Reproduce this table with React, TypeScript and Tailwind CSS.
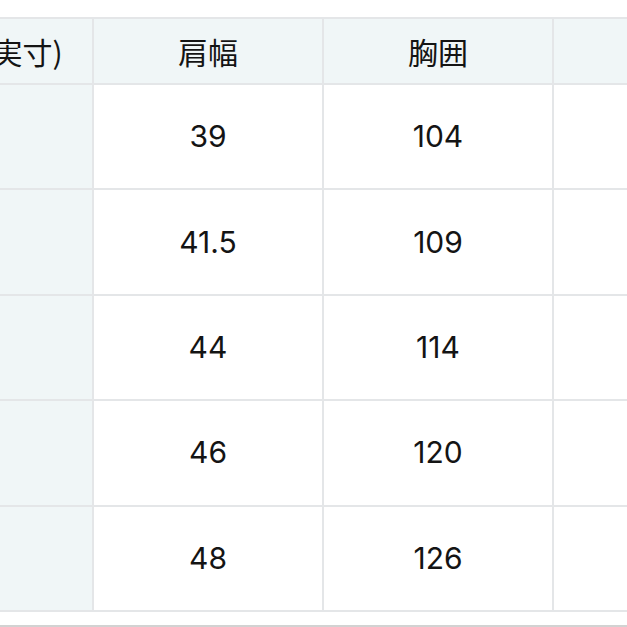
import React from "react";

const rows = [
  ["", "39", "104", ""],
  ["", "41.5", "109", ""],
  ["", "44", "114", ""],
  ["", "46", "120", ""],
  ["", "48", "126", ""],
];

export default function App() {
  return (
    <div className="w-[627px] h-[627px] overflow-hidden bg-white relative">
      <div
        className="ml-[-138px] mt-[17px] w-[920px] grid grid-cols-[228px_228px_228px_228px] grid-rows-[64px_repeat(5,103.4px)] gap-[2px] p-[2px] bg-[#e4e6e8] text-[#141414]"
        style={{ fontFamily: "Inter, 'Noto Sans CJK JP', sans-serif" }}
      >
        {["サイズ(実寸)", "肩幅", "胸囲", ""].map((h, i) => (
          <div
            key={i}
            className="bg-[#f0f6f7] flex items-center justify-center text-[30px]"
            style={{ fontFamily: "'Noto Sans CJK JP', sans-serif" }}
          >
            {h}
          </div>
        ))}
        {rows.map((r, ri) =>
          r.map((c, ci) => (
            <div
              key={`${ri}-${ci}`}
              className={`${ci === 0 ? "bg-[#f0f6f7]" : "bg-white"} flex items-center justify-center text-[30px] font-normal`}
            >
              {c}
            </div>
          ))
        )}
      </div>
      <div className="mt-[13px] h-[2px] bg-[#d2d2d2]" />
    </div>
  );
}
